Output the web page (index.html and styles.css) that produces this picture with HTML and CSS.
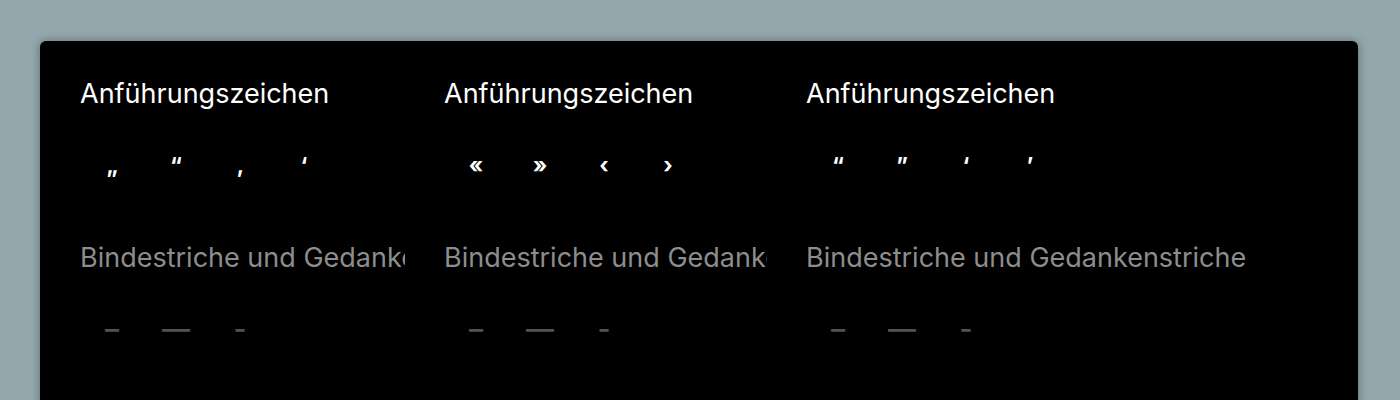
FILE: index.html
```html
<!DOCTYPE html>
<html lang="de">
<head>
  <meta charset="UTF-8" />
  <title>Sonderzeichen</title>
  <link rel="stylesheet" href="styles.css">
</head>
<body>
  <div class="panel">
    <div class="group">
      <h3 class="group-title">Anführungszeichen</h3>
      <div class="glyphs quotes">
        <span class="glyph">„</span><span class="glyph">“</span><span class="glyph">‚</span><span class="glyph">‘</span>
      </div>
      <h3 class="group-title muted">Bindestriche und Gedankenstriche</h3>
      <div class="glyphs dashes">
        <span class="glyph">–</span><span class="glyph">—</span><span class="glyph">-</span>
      </div>
    </div>

    <div class="group">
      <h3 class="group-title">Anführungszeichen</h3>
      <div class="glyphs quotes">
        <span class="glyph">«</span><span class="glyph">»</span><span class="glyph">‹</span><span class="glyph">›</span>
      </div>
      <h3 class="group-title muted">Bindestriche und Gedankenstriche</h3>
      <div class="glyphs dashes">
        <span class="glyph">–</span><span class="glyph">—</span><span class="glyph">-</span>
      </div>
    </div>

    <div class="group last">
      <h3 class="group-title">Anführungszeichen</h3>
      <div class="glyphs quotes">
        <span class="glyph">“</span><span class="glyph">”</span><span class="glyph">‘</span><span class="glyph">’</span>
      </div>
      <h3 class="group-title muted">Bindestriche und Gedankenstriche</h3>
      <div class="glyphs dashes">
        <span class="glyph">–</span><span class="glyph">—</span><span class="glyph">-</span>
      </div>
    </div>
  </div>
</body>
</html>
```

FILE: styles.css
```css
body {
  margin: 0;
  padding: 41px 42px 0 40px;
  background: #93a7ac;
  font-family: Inter, "Noto Sans", sans-serif;
  overflow: hidden;
}
.panel {
  display: grid;
  grid-template-columns: 325px 323px 1fr;
  column-gap: 39px;
  background: #000;
  border-radius: 6px;
  padding: 37px 40px 40px;
  height: 400px;
  box-shadow: 0 0 10px rgba(0,0,0,0.35);
}
.group {
  overflow: hidden;
  white-space: nowrap;
}
.group-title {
  margin: 0;
  font-size: 27px;
  font-weight: 400;
  line-height: 32px;
  color: #fff;
}
.group-title.muted {
  color: #8d8d8d;
}
.glyphs {
  display: flex;
  height: 48px;
  margin: 31px 0 53px;
}
.glyph {
  width: 64px;
  text-align: center;
  font-size: 22px;
  font-weight: 700;
  line-height: 48px;
}
.quotes .glyph {
  color: #fff;
}
.dashes .glyph {
  color: #525252;
  font-weight: 500;
  font-size: 28px;
}
```
